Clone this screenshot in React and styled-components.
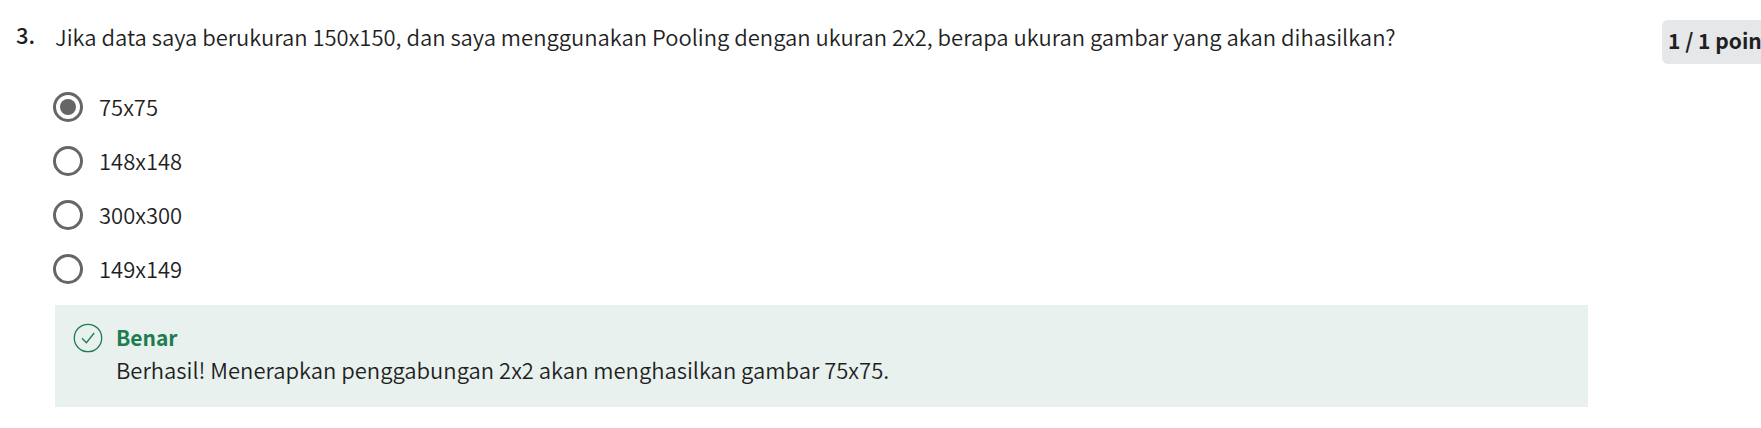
import React, { useState } from "react";
import styled, { createGlobalStyle } from "styled-components";

const GlobalStyle = createGlobalStyle`
  *, *::before, *::after { box-sizing: border-box; }
  body {
    margin: 0;
    background: #fff;
    color: #1f1f1f;
    font-family: "Noto Sans CJK JP", "Noto Sans", sans-serif;
    font-size: 22px;
    font-weight: 350;
    line-height: 32px;
  }
`;

const Question = styled.main`
  display: grid;
  grid-template-columns: 55px minmax(0, 1fr) 99px;
  padding-top: 20px;
  overflow: hidden;
`;

const Number = styled.div`
  padding-left: 16px;
  line-height: 28px;
  font-weight: 500;
`;

const Prompt = styled.legend`
  padding: 0;
`;

const Body = styled.fieldset`
  min-width: 0;
  margin: 0;
  padding: 0;
  border: 0;
`;

const Points = styled.div`
  align-self: start;
  padding: 4px 0 8px 6px;
  border-radius: 6px 0 0 6px;
  background: #e5e7e8;
  font-size: 21px;
  font-weight: 700;
  white-space: nowrap;
`;

const Options = styled.div`
  display: grid;
  gap: 24px;
  margin: 40px 0 21px -2px;
`;

const Option = styled.label`
  display: flex;
  align-items: flex-start;
  gap: 16px;
  justify-self: start;
  line-height: 28px;
`;

const Radio = styled.input`
  appearance: none;
  display: grid;
  place-items: center;
  width: 30px;
  height: 30px;
  margin: 0;
  border: 3px solid #666;
  border-radius: 50%;
  background: #fff;

  &:checked::before {
    content: "";
    width: 16px;
    height: 16px;
    border-radius: 50%;
    background: #666;
  }
`;

const Feedback = styled.section`
  display: flex;
  gap: 13px;
  margin-right: 74px;
  padding: 16px 18px 22px;
  background: #e8f1ee;
`;

const CheckIcon = styled.svg`
  flex: none;
  width: 30px;
  height: 30px;
  margin-top: 2px;
  fill: none;
  stroke: #1d7c50;
`;

const Verdict = styled.h2`
  margin: 0;
  color: #1d7c50;
  font-size: 21px;
  font-weight: 700;
`;

const Explanation = styled.p`
  margin: 0;
`;

const answers = ["75x75", "148x148", "300x300", "149x149"];

export default function App() {
  const [selected, setSelected] = useState("75x75");
  return (
    <>
      <GlobalStyle />
      <Question>
        <Number>3.</Number>
        <Body>
          <Prompt>
            Jika data saya berukuran 150x150, dan saya menggunakan Pooling dengan ukuran 2x2, berapa ukuran gambar yang akan dihasilkan?
          </Prompt>
          <Options>
            {answers.map((answer) => (
              <Option key={answer}>
                <Radio
                  type="radio"
                  name="answer"
                  value={answer}
                  checked={selected === answer}
                  onChange={() => setSelected(answer)}
                />
                <span>{answer}</span>
              </Option>
            ))}
          </Options>
          <Feedback>
            <CheckIcon viewBox="0 0 30 30" aria-hidden="true">
              <circle cx="15" cy="15" r="13.7" strokeWidth="1.3" />
              <path d="M9 15.2l4.4 4.5L21.2 10" strokeWidth="1.3" />
            </CheckIcon>
            <div>
              <Verdict>Benar</Verdict>
              <Explanation>Berhasil! Menerapkan penggabungan 2x2 akan menghasilkan gambar 75x75.</Explanation>
            </div>
          </Feedback>
        </Body>
        <Points>1 / 1 poin</Points>
      </Question>
    </>
  );
}
